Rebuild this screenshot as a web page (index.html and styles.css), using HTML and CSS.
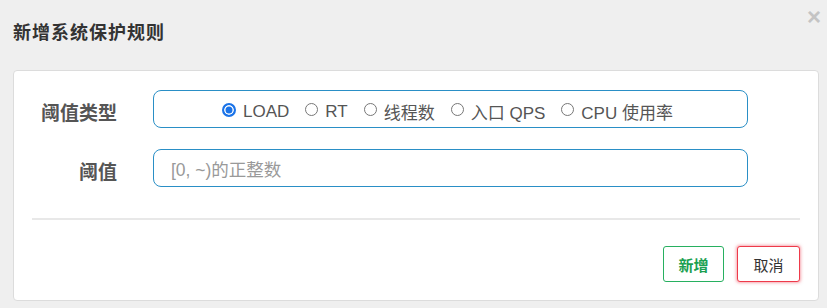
FILE: index.html
```html
<!DOCTYPE html>
<html lang="zh">
<head>
<meta charset="utf-8">
<link rel="stylesheet" href="styles.css">
</head>
<body>
<div class="dialog">
  <div class="header">
    <h3 class="title">新增系统保护规则</h3>
    <span class="close">×</span>
  </div>
  <div class="panel">
    <div class="form">
      <div class="row">
        <label class="label">阈值类型</label>
        <div class="field radios">
          <span class="radio"><span class="dot checked"></span>LOAD</span>
          <span class="radio"><span class="dot"></span>RT</span>
          <span class="radio"><span class="dot"></span>线程数</span>
          <span class="radio"><span class="dot"></span>入口 QPS</span>
          <span class="radio"><span class="dot"></span>CPU 使用率</span>
        </div>
      </div>
      <div class="row">
        <label class="label">阈值</label>
        <div class="field input"><span class="placeholder">[0, ~)的正整数</span></div>
      </div>
    </div>
    <div class="divider"></div>
    <div class="actions">
      <button class="btn btn-add">新增</button>
      <button class="btn btn-cancel">取消</button>
    </div>
  </div>
</div>
</body>
</html>
```
FILE: styles.css
```css
* { box-sizing: border-box; }
html, body {
  margin: 0;
  padding: 0;
  background: #efefef;
  font-family: "Liberation Sans", "Noto Sans CJK SC", sans-serif;
  color: #333;
}
.dialog {
  width: 827px;
  height: 308px;
  padding: 0 8px 0 13px;
}
.header {
  position: relative;
  height: 70px;
  display: flex;
  align-items: center;
}
.title {
  margin: 0;
  margin-top: -8px;
  font-size: 18px;
  letter-spacing: 1px;
  font-weight: bold;
  color: #333;
}
.close {
  position: absolute;
  right: -2px;
  top: 5px;
  font-size: 24px;
  line-height: 24px;
  color: #c4c4c4;
  font-weight: bold;
}
.panel {
  background: #fff;
  border: 1px solid #dcdcdc;
  border-radius: 4px;
  height: 231px;
  padding: 19px 18px 0 18px;
}
.form {
  display: flex;
  flex-direction: column;
  gap: 21px;
}
.row {
  display: flex;
  align-items: center;
  gap: 36px;
}
.label {
  width: 85px;
  text-align: right;
  font-size: 19px;
  font-weight: bold;
  color: #555;
  white-space: nowrap;
  padding-top: 4px;
}
.field {
  width: 595px;
  height: 38px;
  border: 1.5px solid #2a8fc6;
  border-radius: 8px;
  display: flex;
  align-items: center;
  font-size: 17px;
  color: #555;
}
.radios {
  justify-content: center;
  gap: 16px;
  padding: 5px 6px 0 0;
}
.radio {
  display: inline-flex;
  align-items: center;
  gap: 7px;
}
.dot {
  width: 13px;
  height: 13px;
  border-radius: 50%;
  border: 1px solid #777;
  background: #fff;
  display: inline-block;
  margin-top: -4px;
}
.dot.checked {
  width: 14px;
  height: 14px;
  border: 2px solid #1a73e8;
  background: #1a73e8;
  box-shadow: inset 0 0 0 1.5px #fff;
}
.input {
  padding-left: 17px;
  padding-top: 1px;
}
.placeholder {
  color: #999;
  font-size: 17.5px;
}
.divider {
  height: 2px;
  background: #e8e8e8;
  margin-top: 31px;
}
.actions {
  display: flex;
  justify-content: flex-end;
  gap: 13px;
  margin-top: 26px;
}
.btn {
  height: 36px;
  font-family: "Noto Sans CJK SC", sans-serif;
  font-size: 15px;
  background: #fff;
  border-radius: 3px;
  padding: 0;
}
.btn-add {
  width: 61px;
  border: 1.5px solid #27b060;
  color: #1aa050;
  font-weight: bold;
}
.btn-cancel {
  width: 63px;
  border: 1.5px solid #ee3a4a;
  color: #333;
  box-shadow: 0 0 3px 1px rgba(240, 80, 95, 0.5);
}
```
